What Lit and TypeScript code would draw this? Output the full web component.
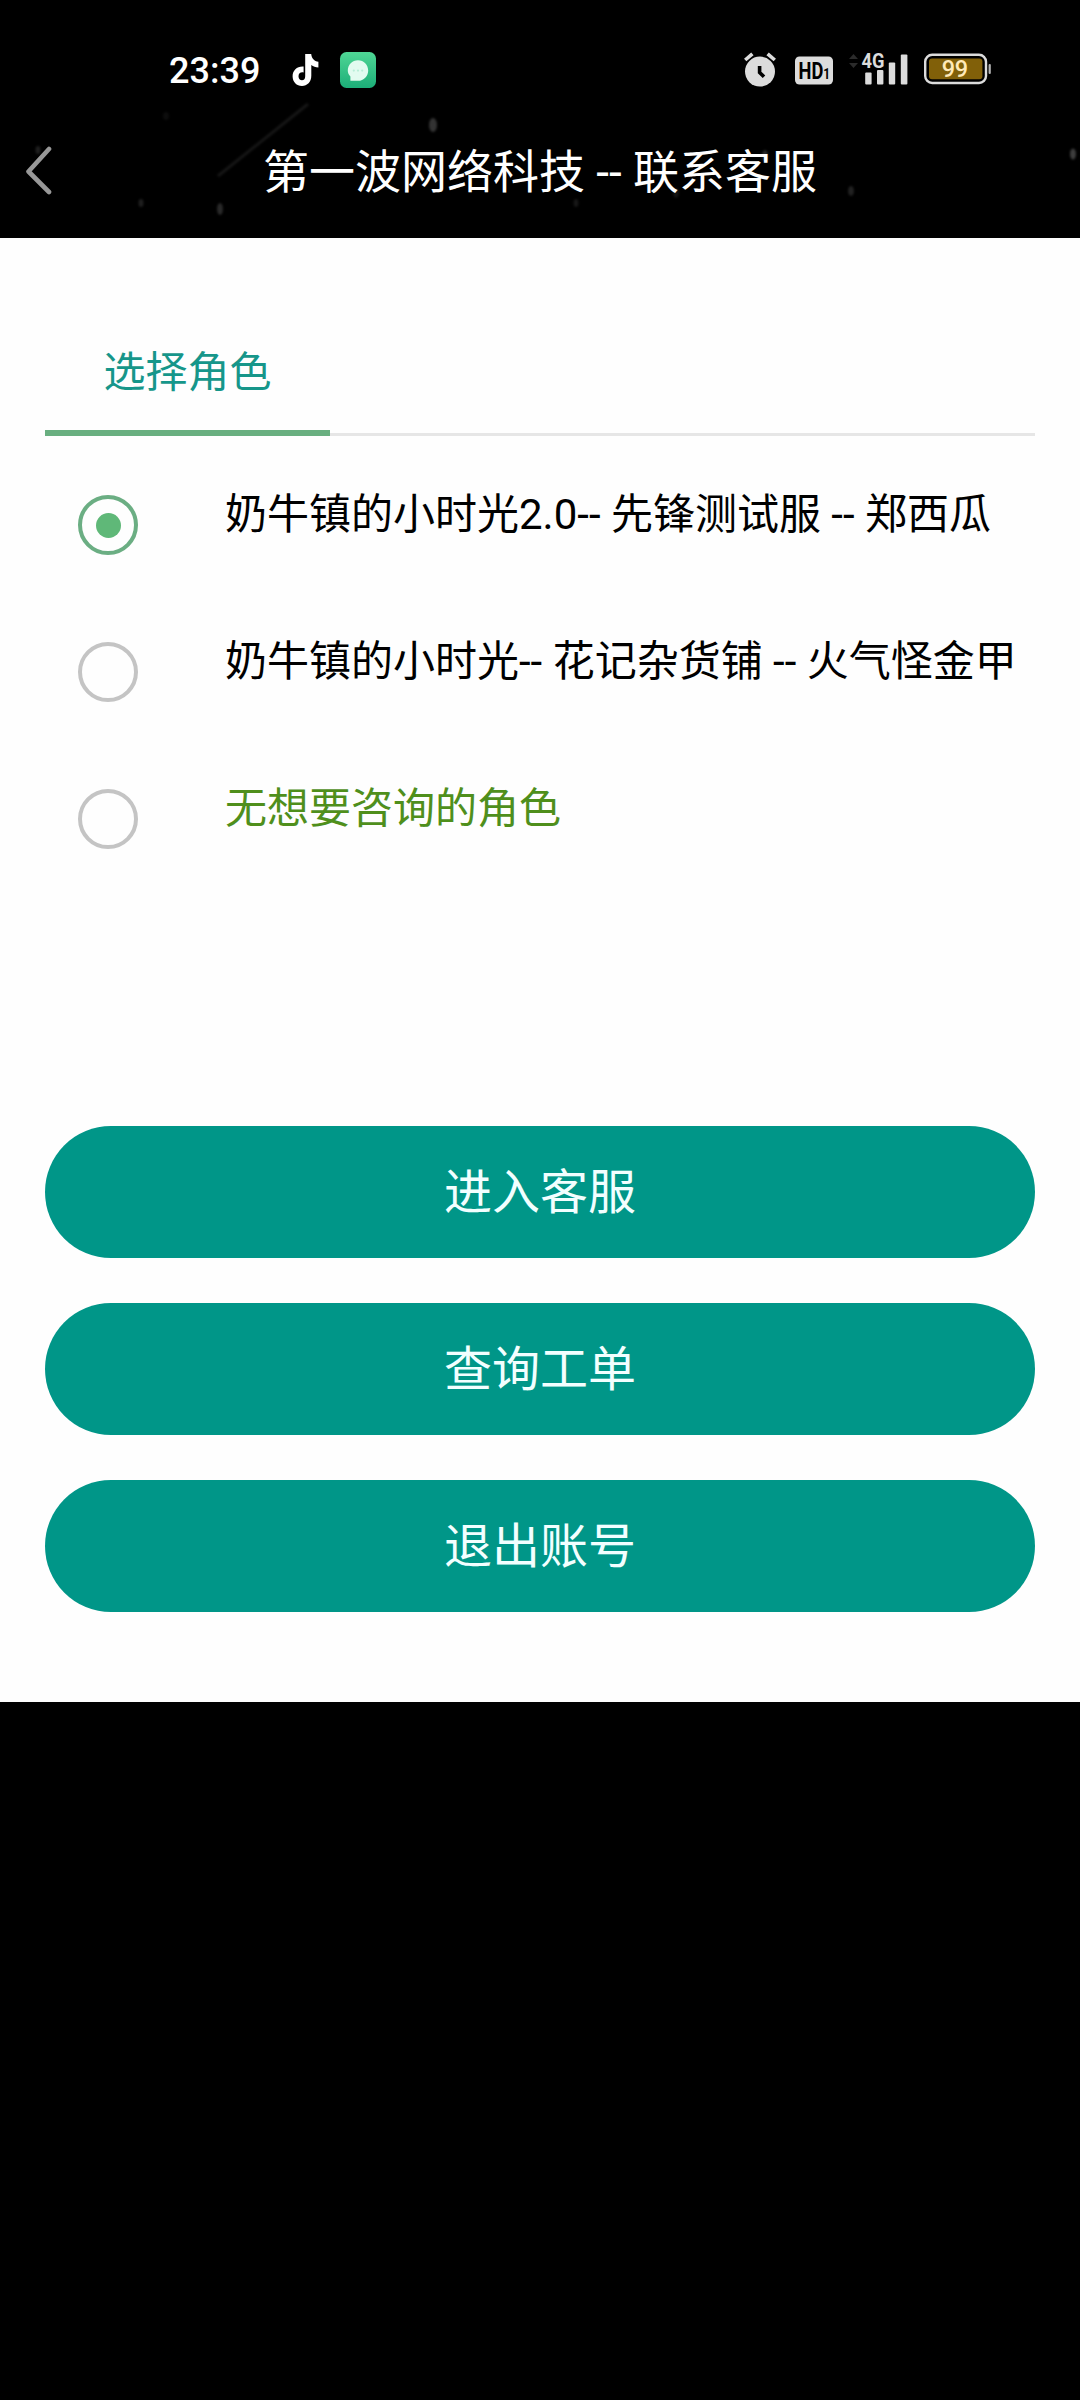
import { LitElement, html, css, svg } from "lit";
import { customElement, property, state } from "lit/decorators.js";
import { classMap } from "lit/directives/class-map.js";

const STARS: [number, number, number, number, number][] = [
  // cx, cy, rx, ry, opacity
  [166, 116, 3, 4, 0.05],
  [433, 125, 4, 7, 0.2],
  [38, 150, 2.5, 4, 0.12],
  [141, 203, 2.5, 4, 0.12],
  [220, 209, 3, 6, 0.16],
  [765, 156, 3, 6, 0.16],
  [676, 193, 3, 5, 0.08],
  [576, 203, 2.5, 4, 0.09],
  [851, 191, 3, 5, 0.13],
  [1073, 154, 3, 5.5, 0.24],
];

@customElement("status-bar")
class StatusBar extends LitElement {
  static styles = css`
    :host {
      display: flex;
      align-items: center;
      height: 137px;
      box-sizing: border-box;
      padding: 2px 89px 0 169px;
      color: #fff;
      font-family: Roboto, "Liberation Sans", sans-serif;
    }
    svg {
      display: block;
      flex: none;
      overflow: visible;
    }
    .time {
      font-size: 36px;
      font-weight: 500;
      line-height: 42px;
      width: 123px;
      padding-top: 2px;
    }
    .chat {
      margin-left: 21px;
    }
    .right {
      display: flex;
      align-items: center;
      margin-left: auto;
    }
    .alarm {
      margin-right: 19px;
    }
    .hd {
      margin-right: 15px;
    }
    .signal {
      margin-right: 16px;
    }
  `;

  render() {
    return html`
      <span class="time">23:39</span>
      <svg width="27" height="34" viewBox="0 0 27 34">
        <path
          d="M13.2 1H19.2C19.6 5.2 22.2 8.2 26.4 8.7V14.4C23.7 14.4 21.3 13.5 19.3 12.1V22.8C19.3 29 15.2 33 10 33C4.6 33 .6 28.8 .6 23.2C.6 17.2 5.4 13 11.6 13.6V19.4C8.6 18.7 6.5 20.5 6.5 23.2C6.5 25.6 8 27.3 10 27.3C12 27.3 13.2 25.8 13.2 23.3Z"
          fill="#fff"
        />
      </svg>
      <svg class="chat" width="36" height="36" viewBox="0 0 36 36">
        <defs>
          <linearGradient id="g" x1="0" y1="0" x2="0" y2="1">
            <stop offset="0" stop-color="#4fd695" />
            <stop offset="1" stop-color="#1cae78" />
          </linearGradient>
        </defs>
        <rect width="36" height="36" rx="6.5" fill="url(#g)" />
        <path d="M18 8.2C23.8 8.2 28.2 12.9 28.2 18.4S23.8 28.8 18 28.8H10.4V24.4C8.6 22.6 7.8 20.6 7.8 18.4C7.8 12.9 12.2 8.2 18 8.2Z" fill="#e2fbf0" />
        <g fill="#b9eed8">
          <circle cx="13.8" cy="18.6" r="1.1" />
          <circle cx="18" cy="18.6" r="1.1" />
          <circle cx="22.2" cy="18.6" r="1.1" />
        </g>
      </svg>
      <div class="right">
        <svg class="alarm" width="32" height="36" viewBox="0 0 32 36">
          <circle cx="16" cy="19.6" r="15" fill="#dcdcdc" />
          <path d="M1.2 8L8.4 1.8M30.8 8L23.6 1.8" stroke="#dcdcdc" stroke-width="3.6" />
          <path d="M15.6 14V20.4L20 24.8" stroke="#000" stroke-width="3.6" fill="none" />
        </svg>
        <svg class="hd" width="38" height="36" viewBox="0 0 38 36">
          <rect y="4.5" width="38" height="28" rx="4.5" fill="#dcdcdc" />
          <text x="3.6" y="26.8" font-size="23" font-weight="700" textLength="31.6" lengthAdjust="spacingAndGlyphs">HD<tspan font-size="15">1</tspan></text>
        </svg>
        <svg class="signal" width="60" height="36" viewBox="0 0 60 36">
          <path d="M1 7L5.5 2L10 7ZM1 11L5.5 16L10 11Z" fill="#2b2b2b" />
          <text x="13.6" y="16" font-size="20.5" font-weight="700" fill="#dcdcdc" textLength="23" lengthAdjust="spacingAndGlyphs">4G</text>
          <g fill="#dcdcdc">
            <rect x="17.2" y="20.4" width="6.4" height="12.2" rx="1" />
            <rect x="29" y="18" width="6.4" height="14.6" rx="1" />
            <rect x="40.8" y="10.6" width="6.4" height="22" rx="1" />
            <rect x="52.8" y="2.6" width="6.6" height="30" rx="1" />
          </g>
        </svg>
        <svg width="67" height="36" viewBox="0 0 67 36">
          <rect x="1.2" y="2.8" width="60.8" height="28.2" rx="7" fill="none" stroke="#dcdcdc" stroke-width="2.4" />
          <rect x="5" y="6.6" width="53.4" height="20.6" rx="3" fill="#816009" />
          <rect x="64.6" y="12" width="2.2" height="10" rx="1" fill="#b4b4b4" />
          <text x="17.8" y="25.2" font-size="23.5" font-weight="500" fill="#ffe9b8" textLength="26.4">99</text>
        </svg>
      </div>
    `;
  }
}

@customElement("role-option")
class RoleOption extends LitElement {
  @property() label = "";
  @property({ type: Boolean }) checked = false;
  @property({ type: Boolean }) accent = false;

  static styles = css`
    :host {
      display: flex;
      height: 147px;
      box-sizing: border-box;
      padding-left: 33px;
    }
    .radio {
      display: flex;
      align-items: center;
      justify-content: center;
      flex: none;
      box-sizing: border-box;
      width: 60px;
      height: 60px;
      margin: 30px 87px 0 0;
      border: 4px solid #c4c4c4;
      border-radius: 50%;
    }
    .radio.on {
      border-color: #6bae83;
    }
    .dot {
      width: 25px;
      height: 25px;
      border-radius: 50%;
      background: #5fb878;
    }
    .label {
      padding-top: 22px;
      font-size: 42px;
      line-height: 56px;
      color: #000;
      white-space: nowrap;
    }
    .label.accent {
      color: #4f8f1c;
    }
  `;

  render() {
    return html`
      <span class=${classMap({ radio: true, on: this.checked })}>
        ${this.checked ? html`<span class="dot"></span>` : null}
      </span>
      <span class=${classMap({ label: true, accent: this.accent })}>${this.label}</span>
    `;
  }
}

@customElement("app-root")
class AppRoot extends LitElement {
  @state() private selected = 0;

  private roles = [
    "奶牛镇的小时光2.0-- 先锋测试服 -- 郑西瓜",
    "奶牛镇的小时光-- 花记杂货铺 -- 火气怪金甲",
    "无想要咨询的角色",
  ];
  private actions = ["进入客服", "查询工单", "退出账号"];

  static styles = css`
    :host {
      display: block;
      width: 1080px;
      height: 2400px;
      overflow: hidden;
      background: #000;
      font-family: Roboto, "Noto Sans CJK SC", sans-serif;
      font-weight: 400;
    }
    .top {
      position: relative;
      height: 238px;
      background: #000;
    }
    .sky {
      position: absolute;
      left: 0;
      top: 0;
      filter: blur(1px);
    }
    status-bar,
    .nav {
      position: relative;
    }
    .nav {
      display: grid;
      grid-template-columns: 80px 1fr 80px;
      align-items: center;
      height: 70px;
      color: #fff;
    }
    .back {
      display: block;
      margin: 0 0 5px 24px;
    }
    .title {
      margin: 0;
      text-align: center;
      font-size: 46px;
      line-height: 64px;
      font-weight: 400;
    }
    .page {
      box-sizing: border-box;
      height: 1464px;
      padding: 92px 45px 0;
      background: #fefefe;
    }
    .tabs {
      display: flex;
      height: 106px;
      box-sizing: border-box;
      box-shadow: inset 0 -3px #e6e6e6;
    }
    .tab {
      box-sizing: border-box;
      width: 285px;
      padding-top: 15px;
      border-bottom: 6px solid #69af80;
      text-align: center;
      font-size: 42px;
      line-height: 56px;
      color: #16968a;
    }
    .roles {
      display: flex;
      flex-direction: column;
      padding-top: 29px;
      height: 661px;
    }
    .actions {
      display: flex;
      flex-direction: column;
      gap: 45px;
    }
    .action {
      height: 132px;
      padding: 1px 0 0;
      border: 0;
      border-radius: 66px;
      background: #009688;
      color: #f2ffff;
      font: inherit;
      font-size: 48px;
      line-height: 131px;
    }
  `;

  render() {
    return html`
      <header class="top">
        <svg class="sky" width="1080" height="238" viewBox="0 0 1080 238">
          <path d="M218 176L308 104" stroke="#161616" stroke-width="3" />
          ${STARS.map(
            ([cx, cy, rx, ry, o]) =>
              svg`<ellipse cx=${cx} cy=${cy} rx=${rx} ry=${ry} fill="#fff" fill-opacity=${o} />`
          )}
        </svg>
        <status-bar></status-bar>
        <nav class="nav">
          <svg class="back" width="30" height="50" viewBox="0 0 30 50">
            <path d="M25 4L4.5 26.5L25 47" fill="none" stroke="#989898" stroke-width="4.6" stroke-linecap="round" stroke-linejoin="round" />
          </svg>
          <h1 class="title">第一波网络科技 -- 联系客服</h1>
        </nav>
      </header>
      <main class="page">
        <div class="tabs"><div class="tab">选择角色</div></div>
        <div class="roles">
          ${this.roles.map(
            (r, i) => html`<role-option
              .label=${r}
              .checked=${i === this.selected}
              .accent=${i === 2}
              @click=${() => (this.selected = i)}
            ></role-option>`
          )}
        </div>
        <div class="actions">
          ${this.actions.map((a) => html`<button class="action">${a}</button>`)}
        </div>
      </main>
    `;
  }
}
